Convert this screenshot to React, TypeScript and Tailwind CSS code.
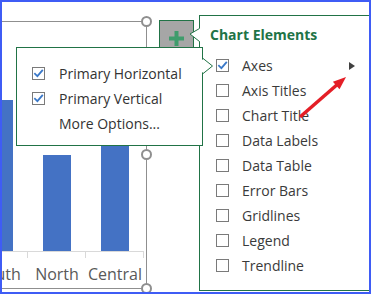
import React from "react";

const Check = () => (
  <svg width="11" height="11" viewBox="0 0 11 11" className="block">
    <path d="M2 5.8 L4.4 8.2 L9.2 2.6" fill="none" stroke="#3a78c8" strokeWidth="1.8" strokeLinecap="square" />
  </svg>
);

const Box = ({ checked }: { checked?: boolean }) => (
  <div className="w-[13px] h-[13px] shrink-0 border border-[#7a7a7a] bg-white flex items-center justify-center">
    {checked ? <Check /> : null}
  </div>
);

const Handle = ({ top }: { top: string }) => (
  <div className={`absolute left-[139px] ${top} w-[11px] h-[11px] rounded-full border-2 border-[#8f8f8f] bg-white`} />
);

export default function App() {
  const items = [
    "Axes",
    "Axis Titles",
    "Chart Title",
    "Data Labels",
    "Data Table",
    "Error Bars",
    "Gridlines",
    "Legend",
    "Trendline",
  ];
  return (
    <div className="w-[371px] h-[295px] bg-white font-['Open_Sans',sans-serif]">
      <div className="relative w-[371px] h-[294px] border-2 border-[#3f5cf5] overflow-hidden bg-white">
        {/* chart */}
        <div className="pt-[19px]">
          <div className="w-[145px] h-[268px] border-t border-r border-b border-[#8f8f8f] overflow-hidden">
            <div className="flex h-[230px] ml-[-32px]">
              <div className="w-[58px] shrink-0 h-full flex items-end justify-center border-b border-[#d9d9d9]">
                <div className="w-[28px] h-[151px] bg-[#4472c4]" />
              </div>
              <div className="w-[58px] shrink-0 h-full flex items-end justify-center border-b border-[#d9d9d9]">
                <div className="w-[28px] h-[96px] bg-[#4472c4]" />
              </div>
              <div className="w-[58px] shrink-0 h-full flex items-end justify-center border-b border-[#d9d9d9]">
                <div className="w-[28px] h-[141px] bg-[#4472c4]" />
              </div>
            </div>
            <div className="flex ml-[-32px]">
              <div className="w-[58px] shrink-0 h-[6px] border-r border-[#d9d9d9]" />
              <div className="w-[58px] shrink-0 h-[6px] border-r border-[#d9d9d9]" />
              <div className="w-[58px] shrink-0 h-[6px] border-r border-[#d9d9d9]" />
            </div>
            <div className="flex ml-[-32px] mt-[5px] text-[16px] leading-[22px] text-[#595959]">
              <div className="w-[58px] shrink-0 text-center whitespace-nowrap">South</div>
              <div className="w-[58px] shrink-0 text-center whitespace-nowrap">North</div>
              <div className="w-[58px] shrink-0 text-center whitespace-nowrap">Central</div>
            </div>
          </div>
        </div>

        {/* selection handles */}
        <Handle top="top-[14px]" />
        <Handle top="top-[147px]" />
        <Handle top="top-[281px]" />

        {/* plus button */}
        <div className="absolute left-[157px] top-[18px] w-[35px] h-[35px] bg-[#a6a6a6] border border-[#217346] flex items-start justify-center pt-[10px]">
          <svg width="15" height="15" viewBox="0 0 15 15">
            <rect x="5.5" y="0" width="4" height="15" fill="#3f9c6c" />
            <rect x="0" y="5.5" width="15" height="4" fill="#3f9c6c" />
          </svg>
        </div>

        {/* Chart Elements panel */}
        <div className="absolute left-[197px] top-[13px] w-[200px] h-[276px] border border-[#217346] bg-white text-[14px] text-[#3a3a3a]">
          <div className="pt-[9px] pl-[10px] text-[14px] leading-[20px] font-bold text-[#217346]">Chart Elements</div>
          <div className="mt-[8px]">
            {items.map((t, i) => (
              <div key={t} className="relative h-[25px] flex items-center pl-[16px]">
                <Box checked={i === 0} />
                <span className="ml-[13px] leading-[20px] whitespace-nowrap">{t}</span>
                {i === 0 ? (
                  <div className="absolute left-[149px] top-1/2 -translate-y-1/2 w-0 h-0 border-y-[4px] border-y-transparent border-l-[6px] border-l-[#404040]" />
                ) : null}
              </div>
            ))}
          </div>
        </div>
        <svg className="absolute left-[187px] top-[25px]" width="13" height="18" viewBox="0 0 13 18">
          <polygon points="1,7 12,0.5 12,15.5" fill="#ffffff" />
          <polyline points="10.5,1.5 1,7 10.5,14.5" fill="none" stroke="#217346" strokeWidth="1" />
        </svg>

        {/* Axes submenu */}
        <div className="absolute left-[14px] top-[45px] w-[187px] h-[99px] border border-[#217346] bg-white text-[14px] text-[#333333]">
          <div className="pt-[13px] pl-[15px]">
            <div className="h-[25px] flex items-center">
              <Box checked />
              <span className="ml-[14px] leading-[20px] whitespace-nowrap">Primary Horizontal</span>
            </div>
            <div className="h-[25px] flex items-center">
              <Box checked />
              <span className="ml-[14px] leading-[20px] whitespace-nowrap">Primary Vertical</span>
            </div>
            <div className="h-[25px] flex items-center">
              <span className="ml-[27px] leading-[20px] whitespace-nowrap">More Options...</span>
            </div>
          </div>
        </div>
        <svg className="absolute left-[198px] top-[54px]" width="14" height="20" viewBox="0 0 14 20">
          <polygon points="0,2 12.5,10 0,18" fill="#ffffff" />
          <polyline points="2.5,2 12.5,10 2.5,18" fill="none" stroke="#217346" strokeWidth="1" />
        </svg>

        {/* red arrow */}
        <svg className="absolute left-[293px] top-[68px]" width="60" height="55" viewBox="0 0 60 55">
          <line x1="5" y1="47" x2="42" y2="14.8" stroke="#e41e26" strokeWidth="3.5" />
          <polygon points="51,7 44.5,19.3 37.9,11.7" fill="#e41e26" />
        </svg>
      </div>
    </div>
  );
}
